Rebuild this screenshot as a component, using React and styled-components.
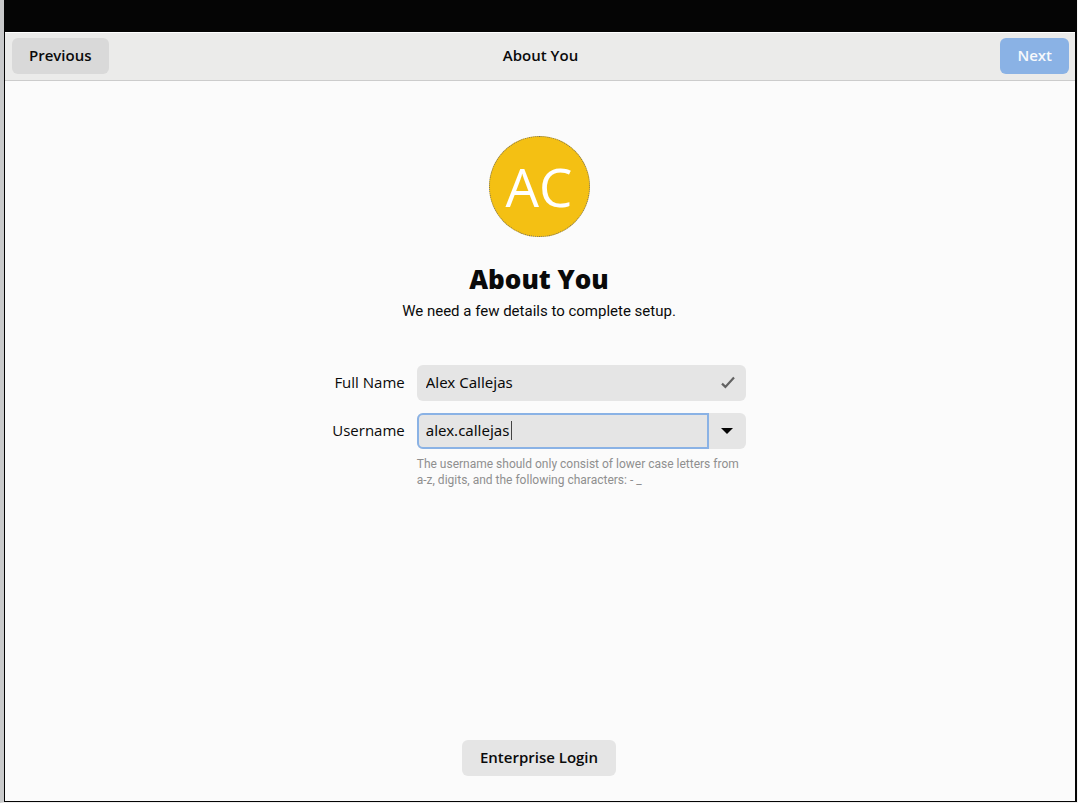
import React, { useState } from "react";
import styled, { createGlobalStyle } from "styled-components";

const GlobalStyle = createGlobalStyle`
  *, *::before, *::after { box-sizing: border-box; }
  body { margin: 0; background: #f6f6f6; }
  body, button, input { font-family: "Open Sans", "Noto Sans", sans-serif; font-size: 15px; line-height: 20px; color: #0a0a0a; }
`;

const Screen = styled.div`
  display: flex;
  flex-direction: column;
  min-height: 100vh;
  border-left: 4px solid #c9cacb;
  border-right: 1px solid #f6f6f6;
  border-bottom: 1px solid #eeeeee;
`;

const TopBar = styled.div`
  height: 32px;
  background: #050505;
`;

const Window = styled.div`
  flex: 1;
  display: flex;
  flex-direction: column;
  background: #fbfbfb;
  border: solid #050505;
  border-width: 0 2px 1px 1px;
`;

const HeaderBar = styled.header`
  display: grid;
  grid-template-columns: 1fr auto 1fr;
  align-items: center;
  height: 49px;
  padding: 0 6px 2px 7px;
  background: #ebebea;
  border-top: 1px solid #ffffff;
  border-bottom: 1px solid #cccccc;
`;

const HeaderTitle = styled.div`
  padding-bottom: 2px;
  font-weight: 600;
`;

const Button = styled.button`
  height: 36px;
  padding: 0 ${(p) => (p.$align ? "17px" : "18px")} 2px;
  border: 0;
  border-radius: 6px;
  font-weight: 600;
  white-space: nowrap;
  justify-self: ${(p) => p.$align || "auto"};
  background: ${(p) => (p.$primary ? "#8ab2e5" : p.$dim ? "#d9d9d9" : "#e5e5e5")};
  color: ${(p) => (p.$primary ? "#f7f9fc" : "#0a0a0a")};
`;

const Content = styled.main`
  flex: 1;
  display: flex;
  flex-direction: column;
  align-items: center;
  padding: 55px 26px 25px 24px;
`;

const Avatar = styled.div`
  display: flex;
  align-items: center;
  justify-content: center;
  width: 101px;
  height: 101px;
  border: 1px dotted #77705a;
  border-radius: 50%;
  background: #f4c013;
  color: #ffffff;
  font-size: 53px;
  font-weight: 400;
  line-height: 100px;
`;

const Title = styled.h1`
  margin: 24px 0 0;
  font-size: 26px;
  font-weight: 800;
  line-height: 36px;
`;

const Subtitle = styled.p`
  margin: 4px 0 0;
  font-family: Roboto, sans-serif;
`;

const Form = styled.form`
  display: grid;
  grid-template-columns: minmax(72px, auto) minmax(0, 329px);
  column-gap: 12px;
  row-gap: 12px;
  align-items: center;
  margin-top: 44px;
`;

const Label = styled.label`
  padding-bottom: 2px;
  text-align: right;
`;

const Field = styled.div`
  position: relative;
  display: flex;
  height: 36px;
  align-items: center;
  border-radius: 6px;
  background: #e5e5e5;
`;

const TextInput = styled.input`
  flex: 1;
  min-width: 0;
  height: 36px;
  padding: 0 7px 2px;
  border: 2px solid ${(p) => (p.$active ? "#8ab2e5" : "transparent")};
  border-radius: ${(p) => (p.$active ? "6px 0 0 6px" : "6px")};
  outline: 0;
  background: transparent;
  font-family: "Noto Sans", sans-serif;
`;

const Caret = styled.span`
  position: absolute;
  left: 94px;
  top: 8px;
  width: 1px;
  height: 19px;
  background: #444444;
`;

const FieldIcon = styled.span`
  display: flex;
  justify-content: center;
  width: 36px;
`;

const MenuButton = styled.button`
  display: flex;
  align-items: center;
  justify-content: center;
  width: 37px;
  height: 36px;
  padding: 0;
  border: 0;
  background: transparent;
`;

const Hint = styled.p`
  grid-column: 2;
  margin: -5px 0 0;
  font-family: Roboto, sans-serif;
  font-size: 12px;
  line-height: 16px;
  color: #8f8f8f;
`;

const Footer = styled.footer`
  margin-top: auto;
`;

function CheckIcon() {
  return (
    <svg width="16" height="16" viewBox="0 0 16 16" fill="none" aria-hidden="true">
      <path d="M2 8.6 L5.4 11.9 L14 2.4" stroke="#626262" strokeWidth="2.2" />
    </svg>
  );
}

function ArrowIcon() {
  return (
    <svg width="14" height="8" viewBox="0 0 14 8" aria-hidden="true">
      <path d="M1 1 H13 L7 7 Z" fill="#050505" />
    </svg>
  );
}

export default function App() {
  const [fullName, setFullName] = useState("Alex Callejas");
  const [username, setUsername] = useState("alex.callejas");
  return (
    <Screen>
      <GlobalStyle />
      <TopBar />
      <Window>
        <HeaderBar>
          <Button type="button" $dim $align="start">Previous</Button>
          <HeaderTitle>About You</HeaderTitle>
          <Button type="button" $primary $align="end">Next</Button>
        </HeaderBar>
        <Content>
          <Avatar>AC</Avatar>
          <Title>About You</Title>
          <Subtitle>We need a few details to complete setup.</Subtitle>
          <Form onSubmit={(e) => e.preventDefault()}>
            <Label htmlFor="full-name">Full Name</Label>
            <Field>
              <TextInput id="full-name" value={fullName} onChange={(e) => setFullName(e.target.value)} />
              <FieldIcon><CheckIcon /></FieldIcon>
            </Field>
            <Label htmlFor="username">Username</Label>
            <Field>
              <TextInput $active id="username" spellCheck={false} value={username} onChange={(e) => setUsername(e.target.value)} />
              <Caret />
              <MenuButton type="button" aria-label="Suggested usernames"><ArrowIcon /></MenuButton>
            </Field>
            <Hint>The username should only consist of lower case letters from a-z, digits, and the following characters: - _</Hint>
          </Form>
          <Footer>
            <Button type="button">Enterprise Login</Button>
          </Footer>
        </Content>
      </Window>
    </Screen>
  );
}
